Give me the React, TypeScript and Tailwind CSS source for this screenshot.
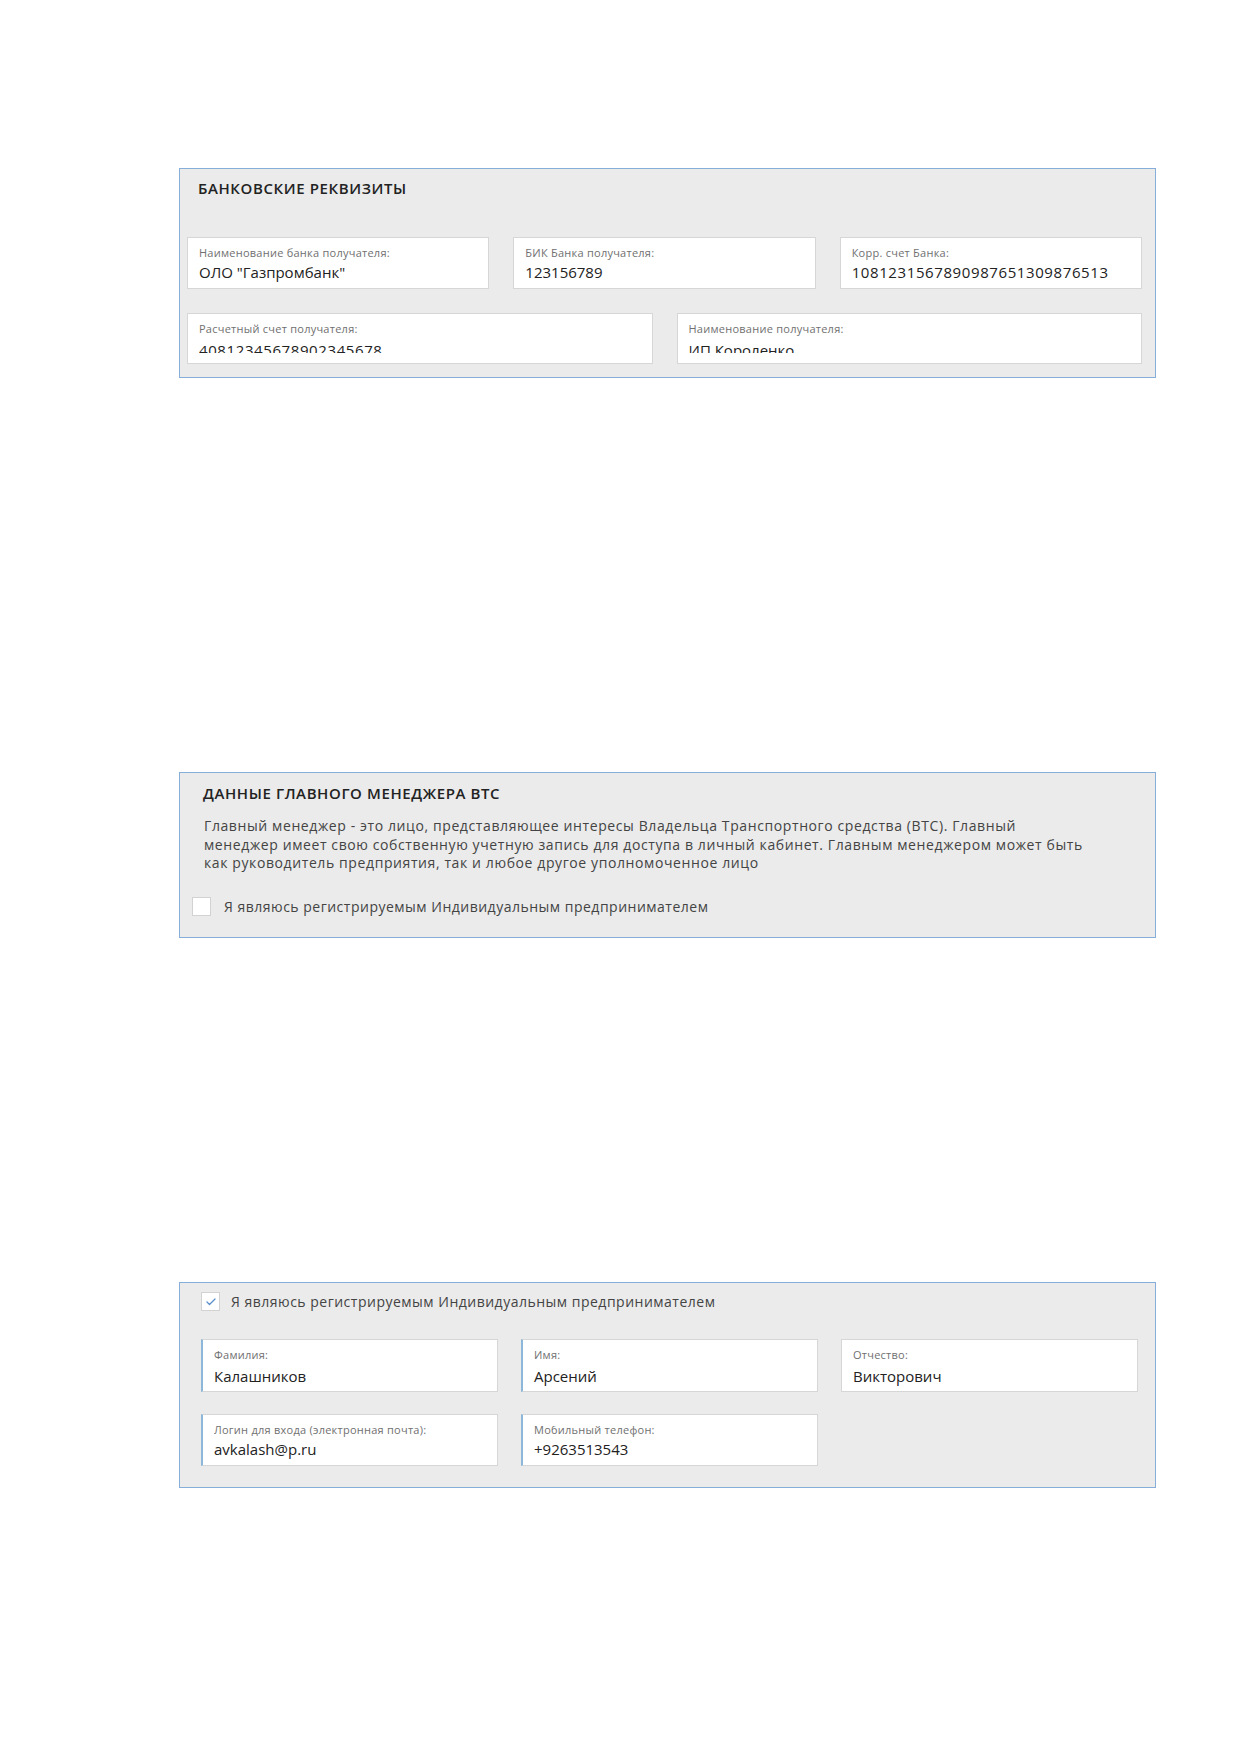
import { Check } from "lucide-react";

const font = "font-['Open_Sans','Liberation_Sans',sans-serif]";

type FieldProps = {
  label: string;
  value: string;
  // row-2 inputs in the mock are cut off by their own box
  clipValue?: boolean;
  clipLabel?: boolean;
  accent?: boolean;
  wide?: boolean;
  valueGap?: string;
  height: string;
};

function Field({ label, value, clipValue, clipLabel, accent, wide, valueGap = "mt-[2px]", height }: FieldProps) {
  const labelCls = "text-[11px] leading-[14px] tracking-[0.25px] text-[#707070]";
  const valueCls = `text-[15px] text-[#222] ${wide ? "tracking-[0.6px]" : ""}`;
  return (
    <div
      className={`${height} border border-[#d6d6d6] bg-white px-[11px] pt-[8px] ${
        accent ? "border-l-2 border-l-[#8cb6da]" : ""
      }`}
    >
      {clipLabel ? (
        <div className="mt-[3px] h-[11px] overflow-hidden">
          <div className={`-mt-[3px] ${labelCls}`}>{label}</div>
        </div>
      ) : (
        <div className={labelCls}>{label}</div>
      )}
      {clipValue ? (
        <div className="mt-[1px] h-[16px] overflow-hidden">
          <div className={`${valueCls} leading-[27px]`}>{value}</div>
        </div>
      ) : (
        <div className={`${valueGap} ${valueCls} leading-[20px]`}>{value}</div>
      )}
    </div>
  );
}

function Checkbox({ checked }: { checked?: boolean }) {
  return (
    <span className="flex h-[19px] w-[19px] shrink-0 items-center justify-center border border-[#d2d2d2] bg-white">
      {checked && <Check size={12} strokeWidth={2.5} className="text-[#5b8fcc]" />}
    </span>
  );
}

function SectionTitle({ children }: { children: string }) {
  return (
    <h2 className="ml-[11px] text-[15px] font-semibold leading-[20px] tracking-[0.6px] text-[#222]">{children}</h2>
  );
}

function IpCheck({ checked, gap }: { checked?: boolean; gap: string }) {
  return (
    <label className={`flex items-center ${gap} text-[14px] leading-[19px] tracking-[0.5px] text-[#444]`}>
      <Checkbox checked={checked} />
      <span>Я являюсь регистрируемым Индивидуальным предпринимателем</span>
    </label>
  );
}

function BankDetails() {
  return (
    <section className="h-[210px] w-[977px] border border-[#87aed8] bg-[#ebebeb] pl-[7px] pr-[13px] pt-[9px]">
      <SectionTitle>БАНКОВСКИЕ РЕКВИЗИТЫ</SectionTitle>
      <div className="mt-[39px] grid grid-cols-3 gap-6">
        <Field height="h-[52px]" label="Наименование банка получателя:" value={'ОЛО "Газпромбанк"'} />
        <Field height="h-[52px]" label="БИК Банка получателя:" value="123156789" />
        <Field height="h-[52px]" label="Корр. счет Банка:" value="1081231567890987651309876513" wide />
      </div>
      <div className="mt-6 grid grid-cols-2 gap-6">
        <Field height="h-[51px]" label="Расчетный счет получателя:" value="40812345678902345678" clipValue wide />
        <Field height="h-[51px]" label="Наименование получателя:" value="ИП Короленко" clipValue />
      </div>
    </section>
  );
}

function ManagerIntro() {
  return (
    <section className="h-[166px] w-[977px] border border-[#87aed8] bg-[#ebebeb] pl-[12px] pt-[10px]">
      <SectionTitle>ДАННЫЕ ГЛАВНОГО МЕНЕДЖЕРА ВТС</SectionTitle>
      <p className="ml-[12px] mt-[14px] text-[14px] leading-[18.5px] tracking-[0.6px] text-[#444]">
        Главный менеджер - это лицо, представляющее интересы Владельца Транспортного средства (ВТС). Главный
        <br />
        менеджер имеет свою собственную учетную запись для доступа в личный кабинет. Главным менеджером может быть
        <br />
        как руководитель предприятия, так и любое другое уполномоченное лицо
      </p>
      <div className="mt-[24px]">
        <IpCheck gap="gap-[13px]" />
      </div>
    </section>
  );
}

function ManagerForm() {
  return (
    <section className="h-[206px] w-[977px] border border-[#87aed8] bg-[#ebebeb] pl-[21px] pr-[17px] pt-[9px]">
      <IpCheck checked gap="gap-[11px]" />
      <div className="mt-[28px] grid grid-cols-3 gap-x-[23px] gap-y-[22px]">
        <Field height="h-[53px]" label="Фамилия:" value="Калашников" accent valueGap="mt-[4px]" />
        <Field height="h-[53px]" label="Имя:" value="Арсений" accent valueGap="mt-[4px]" />
        <Field height="h-[53px]" label="Отчество:" value="Викторович" valueGap="mt-[4px]" />
        <Field
          height="h-[52px]"
          label="Логин для входа (электронная почта):"
          value="avkalash@p.ru"
          accent
          clipLabel
          valueGap="mt-[2px]"
        />
        <Field
          height="h-[52px]"
          label="Мобильный телефон:"
          value="+9263513543"
          accent
          clipLabel
          valueGap="mt-[2px]"
        />
      </div>
    </section>
  );
}

export default function App() {
  return (
    <div className={`${font} min-h-[1752px] bg-white pl-[179px] pt-[168px]`}>
      <BankDetails />
      <div className="mt-[394px]">
        <ManagerIntro />
      </div>
      <div className="mt-[344px]">
        <ManagerForm />
      </div>
    </div>
  );
}
